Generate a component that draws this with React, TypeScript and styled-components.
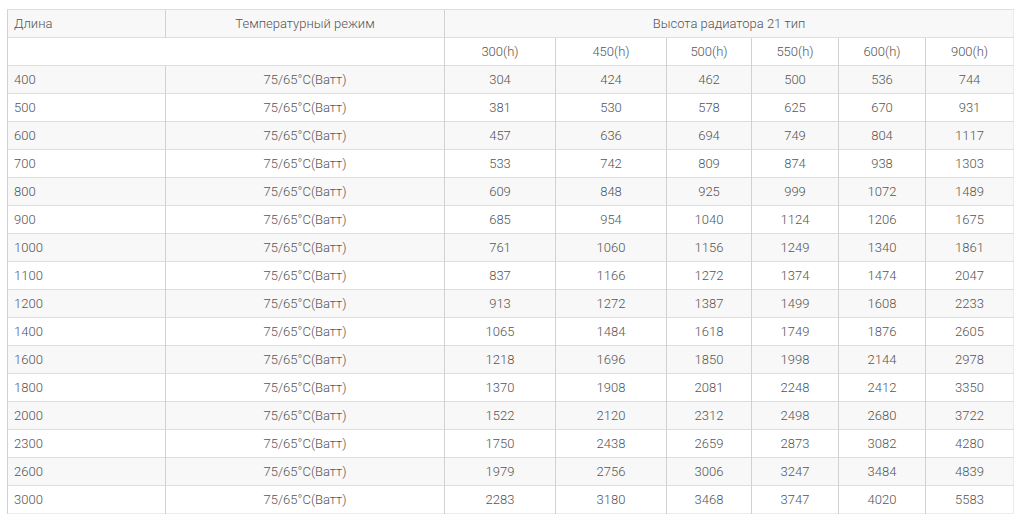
import styled, { createGlobalStyle } from "styled-components";

const GlobalStyle = createGlobalStyle`
  body {
    margin: 0;
    background: #ffffff;
    font-family: Roboto, "Liberation Sans", Arial, sans-serif;
  }
`;

const Page = styled.div`
  padding: 9px 8px 0 7px;
`;

const Table = styled.table`
  width: 1006px;
  border-collapse: collapse;
  table-layout: fixed;
  border: 1px solid #ececec;
  font-size: 13px;
  color: #555555;

  tr:nth-child(odd) td,
  tr:nth-child(odd) th {
    background: #f8f8f8;
  }
`;

const Cell = styled.td<{ $align?: "left" | "center" }>`
  height: 27px;
  padding: 0 6px;
  font-weight: 300;
  text-align: ${({ $align }) => $align ?? "center"};
  border-top: 1px solid #dedede;
  border-left: 1px solid #d2d2d2;
  line-height: 27px;
  white-space: nowrap;
`;

const HeadCell = styled(Cell).attrs({ as: "th" })``;

const widths = [158, 279, 111, 111, 85, 87, 87, 88];
const heights = ["300(h)", "450(h)", "500(h)", "550(h)", "600(h)", "900(h)"];

const rows: [string, number[]][] = [
  ["400", [304, 424, 462, 500, 536, 744]],
  ["500", [381, 530, 578, 625, 670, 931]],
  ["600", [457, 636, 694, 749, 804, 1117]],
  ["700", [533, 742, 809, 874, 938, 1303]],
  ["800", [609, 848, 925, 999, 1072, 1489]],
  ["900", [685, 954, 1040, 1124, 1206, 1675]],
  ["1000", [761, 1060, 1156, 1249, 1340, 1861]],
  ["1100", [837, 1166, 1272, 1374, 1474, 2047]],
  ["1200", [913, 1272, 1387, 1499, 1608, 2233]],
  ["1400", [1065, 1484, 1618, 1749, 1876, 2605]],
  ["1600", [1218, 1696, 1850, 1998, 2144, 2978]],
  ["1800", [1370, 1908, 2081, 2248, 2412, 3350]],
  ["2000", [1522, 2120, 2312, 2498, 2680, 3722]],
  ["2300", [1750, 2438, 2659, 2873, 3082, 4280]],
  ["2600", [1979, 2756, 3006, 3247, 3484, 4839]],
  ["3000", [2283, 3180, 3468, 3747, 4020, 5583]],
];

export default function App() {
  return (
    <Page>
      <GlobalStyle />
      <Table>
        <colgroup>
          {widths.map((w, i) => (
            <col key={i} style={{ width: w }} />
          ))}
        </colgroup>
        <thead>
          <tr>
            <HeadCell $align="left">Длина</HeadCell>
            <HeadCell>Температурный режим</HeadCell>
            <HeadCell colSpan={6}>Высота радиатора 21 тип</HeadCell>
          </tr>
          <tr>
            <HeadCell colSpan={2} />
            {heights.map((h) => (
              <HeadCell key={h}>{h}</HeadCell>
            ))}
          </tr>
        </thead>
        <tbody>
          {rows.map(([len, vals]) => (
            <tr key={len}>
              <Cell $align="left">{len}</Cell>
              <Cell>75/65°C(Ватт)</Cell>
              {vals.map((v, i) => (
                <Cell key={i}>{v}</Cell>
              ))}
            </tr>
          ))}
        </tbody>
      </Table>
    </Page>
  );
}
